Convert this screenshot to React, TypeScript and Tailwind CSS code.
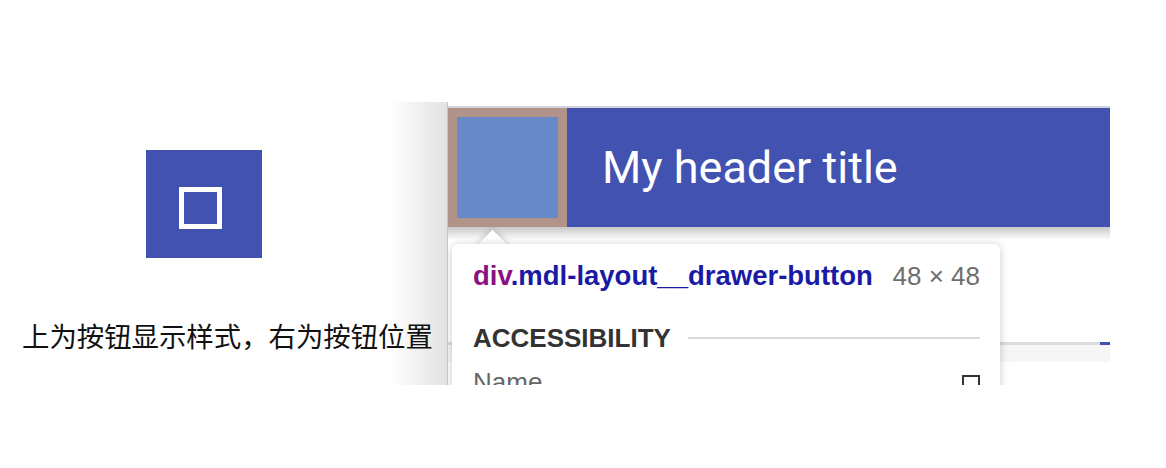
import React from "react";

const cjk = { fontFamily: '"Noto Sans CJK SC", "Liberation Sans", sans-serif' };
const sans = { fontFamily: '"Liberation Sans", Arial, sans-serif' };
const roboto = { fontFamily: 'Roboto, "Liberation Sans", sans-serif' };

const DrawerPreview: React.FC = () => (
  <div className="flex flex-col">
    <div className="ml-[146px] mt-[150px] w-[116px] h-[108px] bg-[#4252b1] flex items-center justify-center pr-[7px] pt-[8px]">
      <div className="w-[43px] h-[42px] border-[5px] border-white" />
    </div>
    <p
      className="mt-[64px] ml-[22px] h-[27px] leading-[27px] text-[27.4px] text-[#111] whitespace-nowrap"
      style={cjk}
    >
      上为按钮显示样式，右为按钮位置
    </p>
  </div>
);

const InspectTooltip: React.FC = () => (
  <>
    <div className="absolute left-[34px] top-[132px] w-[21px] h-[21px] rotate-45 bg-white shadow-[0_0_6px_rgba(0,0,0,0.25)]" />
    <div
      className="absolute left-[4px] top-[142px] w-[548px] h-[180px] bg-white rounded-[6px] shadow-[0_1px_8px_rgba(0,0,0,0.22)] pt-[17px] pl-[21px] pr-[20px]"
      style={sans}
    >
      <div className="flex items-center justify-between h-[30px] leading-[30px]">
        <span className="text-[27.5px] font-bold text-[#1a1aa6] whitespace-nowrap">
          <span className="text-[#881280]">div</span>.mdl-layout__drawer-button
        </span>
        <span className="text-[26px] text-[#6e6e6e] whitespace-nowrap">48 × 48</span>
      </div>
      <div className="mt-[32px] flex items-center gap-[17px] h-[30px]">
        <span className="text-[26px] font-bold text-[#333] whitespace-nowrap">
          ACCESSIBILITY
        </span>
        <div className="flex-1 h-[2px] bg-[#dadada]" />
      </div>
      <div className="mt-[14px] flex items-start justify-between h-[30px] leading-[30px]">
        <span className="text-[26px] text-[#666]">Name</span>
        <div className="mt-[8px] w-[18px] h-[18px] border-2 border-[#333]" />
      </div>
    </div>
  </>
);

const PageShot: React.FC = () => (
  <div className="mt-[102px] h-[283px] w-[720px] shrink-0 flex">
    <div className="w-[58px] bg-linear-to-r from-white to-[#e2e2e2] border-r border-[#c4c4c4]" />
    <div className="relative flex-1 overflow-hidden flex flex-col bg-white">
      <div className="h-[4px] bg-white" />
      <div className="h-[2px] bg-[#d2d3dc]" />
      <header className="h-[119px] bg-[#4252b1] flex items-center">
        <div className="w-[119px] h-full bg-[#b29389] p-[9px]">
          <div className="w-full h-full bg-[#6789c8]" />
        </div>
        <h1 className="ml-[35px] text-white text-[45px] leading-none" style={roboto}>
          My header title
        </h1>
      </header>
      <div className="flex-1 flex flex-col">
        <div className="h-[13px] bg-linear-to-b from-[#c8c8c8] to-white" />
        <div className="h-[102px]" />
        <div className="h-[3px] bg-[#dcdcdc] flex justify-end">
          <div className="w-[10px] h-full bg-[#4252b1]" />
        </div>
        <div className="h-[17px] bg-[#f6f6f6]" />
      </div>
      <InspectTooltip />
    </div>
  </div>
);

export default function App() {
  return (
    <div className="w-[1166px] h-[468px] bg-white flex overflow-hidden">
      <div className="w-[390px] shrink-0 relative z-10">
        <DrawerPreview />
      </div>
      <PageShot />
    </div>
  );
}
